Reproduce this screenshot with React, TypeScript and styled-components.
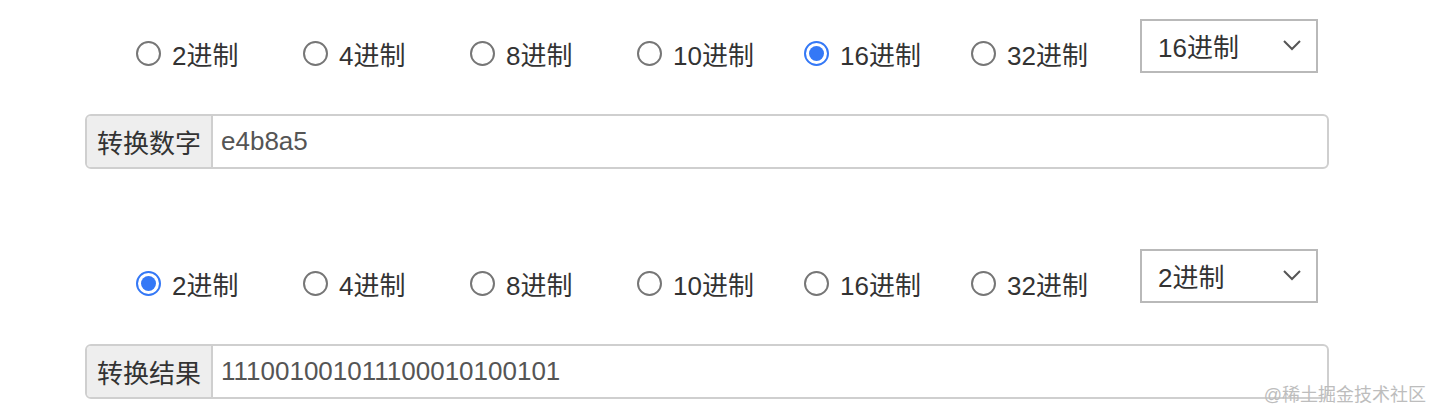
import React, { useState } from "react";
import styled, { createGlobalStyle } from "styled-components";

const GlobalStyle = createGlobalStyle`
  body {
    margin: 0;
    background: #fff;
    font-family: "Liberation Sans", "Noto Sans CJK SC", sans-serif;
  }
`;

const BASES = [2, 4, 8, 10, 16, 32];

const Page = styled.div`
  width: 1440px;
  height: 418px;
  position: relative;
  padding: 19px 0 0 85px;
  box-sizing: border-box;
`;

const Section = styled.div`
  display: flex;
  flex-direction: column;
  gap: 41px;
  width: 1244px;
  margin-bottom: 80px;
`;

const RadioRow = styled.div`
  display: flex;
  align-items: flex-start;
  padding-left: 51px;
`;

const RadioItem = styled.label`
  display: flex;
  align-items: center;
  width: 167px;
  height: 26px;
  margin-top: 21px;
  font-size: 26px;
  color: #333;
  cursor: pointer;
`;

const Circle = styled.span<{ $checked: boolean }>`
  width: 25px;
  height: 25px;
  box-sizing: border-box;
  border-radius: 50%;
  border: 2px solid ${({ $checked }) => ($checked ? "#3478f6" : "#767676")};
  margin-right: 11px;
  display: flex;
  align-items: center;
  justify-content: center;
  flex-shrink: 0;
  &::after {
    content: "";
    width: 15px;
    height: 15px;
    border-radius: 50%;
    background: #3478f6;
    display: ${({ $checked }) => ($checked ? "block" : "none")};
  }
`;

const HiddenInput = styled.input`
  display: none;
`;

const Select = styled.div`
  width: 178px;
  height: 54px;
  margin-left: 2px;
  box-sizing: border-box;
  border: 2px solid #b9b9b9;
  display: flex;
  align-items: center;
  justify-content: space-between;
  padding: 0 14px 2px 16px;
  font-size: 26px;
  color: #333;
`;

const InputGroup = styled.div`
  display: flex;
  height: 55px;
  box-sizing: border-box;
  border: 2px solid #cfcfcf;
  border-radius: 6px;
  overflow: hidden;
`;

const Addon = styled.div`
  width: 124px;
  background: #eee;
  border-right: 2px solid #cfcfcf;
  display: flex;
  align-items: center;
  justify-content: center;
  font-size: 26px;
  color: #333;
`;

const Value = styled.div`
  flex: 1;
  display: flex;
  align-items: center;
  padding-left: 8px;
  font-size: 26px;
  color: #555;
`;

const Watermark = styled.div`
  position: absolute;
  right: 14px;
  bottom: 12px;
  font-size: 18px;
  color: #bdbdbd;
`;

const Chevron = () => (
  <svg width="20" height="12" viewBox="0 0 20 12">
    <path d="M2 2 L10 10 L18 2" fill="none" stroke="#555" strokeWidth="2" />
  </svg>
);

function Converter({ label, value, base }: { label: string; value: string; base: number }) {
  const [sel, setSel] = useState(base);
  return (
    <Section>
      <RadioRow>
        {BASES.map((b) => (
          <RadioItem key={b} onClick={() => setSel(b)}>
            <HiddenInput type="radio" readOnly checked={sel === b} />
            <Circle $checked={sel === b} />
            {b}进制
          </RadioItem>
        ))}
        <Select>
          {sel}进制
          <Chevron />
        </Select>
      </RadioRow>
      <InputGroup>
        <Addon>{label}</Addon>
        <Value>{value}</Value>
      </InputGroup>
    </Section>
  );
}

export default function App() {
  return (
    <>
      <GlobalStyle />
      <Page>
        <Converter label="转换数字" value="e4b8a5" base={16} />
        <Converter label="转换结果" value="111001001011100010100101" base={2} />
        <Watermark>@稀土掘金技术社区</Watermark>
      </Page>
    </>
  );
}
